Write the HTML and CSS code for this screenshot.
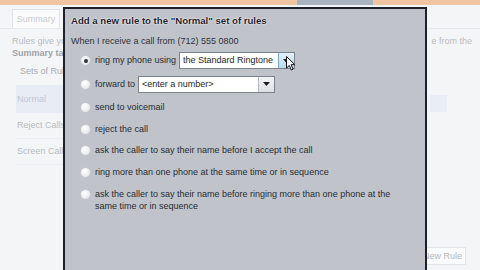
FILE: index.html
```html
<!DOCTYPE html>
<html>
<head>
<meta charset="utf-8">
<link rel="stylesheet" href="styles.css">
</head>
<body>
<div class="screen">
  <div class="topbar"><div class="topbar-seg"></div></div>
  <div class="page">
    <div class="tabs"><div class="tab">Summary</div></div>
    <div class="intro">
      <div class="intro-line"><span>Rules give you</span><span class="intro-right">e from the</span></div>
      <div class="intro-line bold">Summary tab</div>
    </div>
    <div class="main">
      <div class="sets">
        <div class="sets-title">Sets of Rules</div>
        <div class="set active">Normal</div>
        <div class="set">Reject Calls</div>
        <div class="set">Screen Calls</div>
      </div>
      <div class="right">
        <div class="rule-chip"></div>
        <div class="new-rule">New Rule</div>
      </div>
    </div>
  </div>

  <div class="dialog">
    <div class="title">Add a new rule to the "Normal" set of rules</div>
    <div class="sub">When I receive a call from (712) 555 0800</div>
    <div class="options">
      <div class="opt">
        <span class="radio checked"></span>
        <span class="label">ring my phone using</span>
        <span class="select ringtone"><span class="sel-text">the Standard Ringtone</span><span class="sel-btn hover"><svg width="7" height="4" viewBox="0 0 7 4"><path d="M0 0h7L3.5 4z" fill="#1a1d24"/></svg></span></span>
        <svg class="cursor" width="10" height="15" viewBox="0 0 10 15"><path d="M0.5 0.5v11.5l2.8-2.6 2 4.6 1.8-.8-2-4.5h3.8z" fill="#fff" stroke="#111" stroke-width="1"/></svg>
      </div>
      <div class="opt">
        <span class="radio"></span>
        <span class="label">forward to</span>
        <span class="select number"><span class="sel-text">&lt;enter a number&gt;</span><span class="sel-btn"><svg width="7" height="4" viewBox="0 0 7 4"><path d="M0 0h7L3.5 4z" fill="#1a1d24"/></svg></span></span>
      </div>
      <div class="opt"><span class="radio"></span><span class="label">send to voicemail</span></div>
      <div class="opt"><span class="radio"></span><span class="label">reject the call</span></div>
      <div class="opt"><span class="radio"></span><span class="label">ask the caller to say their name before I accept the call</span></div>
      <div class="opt"><span class="radio"></span><span class="label">ring more than one phone at the same time or in sequence</span></div>
      <div class="opt multi"><span class="radio"></span><span class="label">ask the caller to say their name before ringing more than one phone at the same time or in sequence</span></div>
    </div>
  </div>
</div>
</body>
</html>
```
FILE: styles.css
```css
html, body {
  margin: 0;
  padding: 0;
}
body {
  width: 480px;
  height: 270px;
  overflow: hidden;
  background: #f4f5f7;
  font-family: "Liberation Sans", Arial, sans-serif;
}
.screen {
  position: relative;
  width: 480px;
  height: 270px;
  overflow: hidden;
}
.topbar {
  height: 5px;
  background: #f1c5a1;
  position: relative;
}
.topbar-seg {
  position: absolute;
  left: 297px;
  top: 0;
  width: 76px;
  height: 5px;
  background: #a8b3bf;
}
.page {
  display: flex;
  flex-direction: column;
  color: #b9bcc1;
  font-size: 9px;
}
.tabs {
  height: 23px;
  border-bottom: 1px solid #e6e8eb;
  padding-left: 12px;
  display: flex;
  align-items: flex-end;
}
.tab {
  width: 46px;
  height: 18px;
  border: 1px solid #dfe2e6;
  border-bottom: none;
  background: #fbfbfc;
  color: #c8cbcf;
  font-size: 9px;
  display: flex;
  align-items: center;
  justify-content: center;
}
.intro {
  padding: 6px 0 0 12px;
}
.intro-line {
  display: flex;
  height: 12px;
  line-height: 12px;
  white-space: nowrap;
}
.intro-right {
  margin-left: auto;
  margin-right: 8px;
}
.bold {
  font-weight: bold;
  color: #9ea3aa;
}
.main {
  display: flex;
  padding-top: 4px;
}
.sets {
  width: 47px;
  margin-left: 16px;
}
.sets-title {
  height: 16px;
  line-height: 16px;
  padding-left: 4px;
  color: #a9adb3;
  white-space: nowrap;
  overflow: hidden;
}
.set {
  height: 25px;
  line-height: 25px;
  padding-left: 1px;
  border-bottom: 1px solid #eceef1;
  white-space: nowrap;
  overflow: hidden;
}
.set.active {
  background: #e7ecf5;
  height: 28px;
  line-height: 28px;
  margin-top: 6px;
  color: #c3c8d2;
  border-bottom: none;
}
.right {
  margin-left: auto;
  width: 50px;
  display: flex;
  flex-direction: column;
}
.rule-chip {
  width: 17px;
  height: 17px;
  background: #e8edf6;
  margin-top: 32px;
  margin-left: 0;
}
.new-rule {
  width: 37px;
  height: 16px;
  border: 1px solid #e3e5e8;
  background: #fafbfc;
  color: #b3b7bd;
  line-height: 16px;
  text-align: right;
  padding-right: 3px;
  margin-top: 135px;
  margin-left: -6px;
  overflow: hidden;
  white-space: nowrap;
  direction: rtl;
}
.dialog {
  position: absolute;
  left: 63px;
  top: 7px;
  width: 360px;
  height: 280px;
  background: #c0c4ca;
  border: 2px solid #1d212a;
  border-bottom: none;
  color: #272b33;
  font-size: 9px;
  padding: 0;
}
.title {
  font-weight: bold;
  font-size: 9.6px;
  padding: 5px 0 0 6px;
  height: 14px;
  line-height: 14px;
  color: #1d2028;
  text-shadow: 0 0 2px #fff, 0 0 1px #fff;
}
.sub {
  padding: 7px 0 0 6px;
  height: 13px;
  line-height: 13px;
  color: #2e323a;
}
.options {
  padding: 6px 0 0 16px;
}
.opt {
  display: flex;
  align-items: flex-start;
  min-height: 13px;
  line-height: 13px;
  margin-bottom: 8.6px;
  position: relative;
}
.opt.multi {
  line-height: 12px;
}
.radio {
  flex: none;
  width: 9px;
  height: 9px;
  border-radius: 50%;
  background: radial-gradient(circle at 40% 35%, #ffffff 0%, #eef0f2 50%, #d8dbe0 100%);
  box-shadow: 0 0 0 0.5px #c8ccd2;
  margin-top: 2px;
  margin-right: 5px;
  position: relative;
}
.radio.checked::after {
  content: "";
  position: absolute;
  left: 2.5px;
  top: 2.5px;
  width: 4px;
  height: 4px;
  border-radius: 50%;
  background: #2a3444;
}
.label {
  white-space: nowrap;
}
.opt.multi .label {
  white-space: normal;
  width: 312px;
}
.select {
  display: flex;
  height: 15px;
  border: 1px solid #7c828c;
  background: #fff;
  margin-left: 3px;
  margin-top: -2px;
}
.sel-text {
  flex: 1;
  padding-left: 3px;
  line-height: 15px;
  color: #1c1f26;
  white-space: nowrap;
  overflow: hidden;
}
.sel-btn {
  width: 15px;
  border-left: 1px solid #b5bac2;
  background: linear-gradient(#f4f5f7, #dcdfe4);
  display: flex;
  align-items: center;
  justify-content: center;
}
.sel-btn.hover {
  background: linear-gradient(#e2f1fb, #b9d9ee);
  border-left-color: #7aa7c9;
}
.ringtone { width: 114px; }
.number { width: 135px; }
.cursor {
  position: absolute;
  left: 205px;
  top: 2px;
}
```
